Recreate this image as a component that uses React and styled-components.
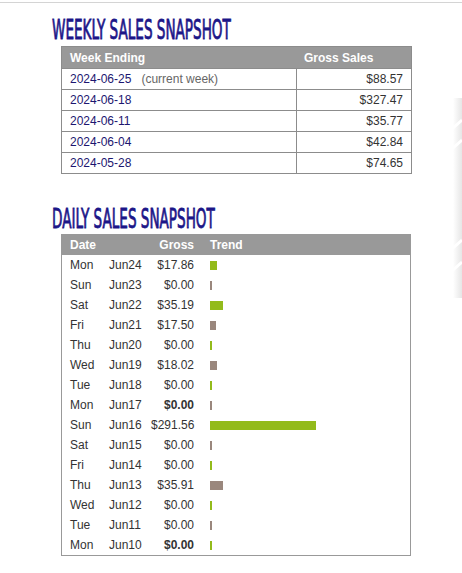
import React from "react";
import styled, { createGlobalStyle } from "styled-components";

const Global = createGlobalStyle`
  body {
    margin: 0;
    background: #fff;
    font-family: "Liberation Sans", Arial, sans-serif;
    font-size: 12px;
    color: #333;
  }
`;

const Page = styled.div`
  position: relative;
  width: 462px;
  height: 573px;
  overflow: hidden;
  border-top: 1px solid #d4d4d4;
  margin-top: 2px;
  box-sizing: border-box;
`;

const Section = styled.section`
  padding-left: 52px;
  padding-top: ${(p) => p.$top}px;
`;

const Heading = styled.h2`
  margin: 0;
  height: 26px;
  font-family: "Liberation Sans Narrow", "DejaVu Sans Condensed", sans-serif;
  font-weight: normal;
  font-size: 26px;
  line-height: 26px;
  color: #1c1688;
  -webkit-text-stroke: 0.8px #1c1688;
  transform: scaleX(0.58);
  transform-origin: left center;
  white-space: nowrap;
`;

const WeekTable = styled.table`
  margin: ${(p) => p.$gap}px 0 0 9px;
  width: 351px;
  border-collapse: collapse;
  border: 1px solid #8c8c8c;

  th {
    background: #999;
    color: #fff;
    font-weight: bold;
    text-align: left;
    height: 21px;
    padding: 0 8px;
    font-size: 12px;
  }

  td {
    border: 1px solid #8c8c8c;
    height: 20px;
    padding: 0 8px;
  }
`;

const DateLink = styled.a`
  color: #1c1670;
  text-decoration: none;
`;

const Note = styled.span`
  color: #666;
  margin-left: 10px;
`;

const Amount = styled.td`
  text-align: right;
  color: #333;
`;

const DayTable = styled.div`
  margin: ${(p) => p.$gap}px 0 0 9px;
  width: 350px;
  border: 1px solid #999;
  box-sizing: border-box;
`;

const DayRow = styled.div`
  display: grid;
  grid-template-columns: 39px 42px 43px 1fr;
  align-items: center;
  height: 20px;
  padding-left: 8px;
  background: ${(p) => (p.$head ? "#999" : "transparent")};
  color: ${(p) => (p.$head ? "#fff" : "#333")};
  font-weight: ${(p) => (p.$head ? "bold" : "normal")};
`;

const Gross = styled.span`
  text-align: right;
  font-weight: ${(p) => (p.$bold ? "bold" : "inherit")};
`;

const TrendCell = styled.span`
  padding-left: 16px;
  display: flex;
  align-items: center;
`;

const Bar = styled.span`
  display: block;
  height: 9px;
  flex: none;
  background: ${(p) => (p.$alt ? "#9a877d" : "#93bb1b")};
`;

const Deco = styled.svg`
  position: absolute;
  right: 0;
  top: 95px;
`;

const weeks = [
  ["2024-06-25", "$88.57", true],
  ["2024-06-18", "$327.47"],
  ["2024-06-11", "$35.77"],
  ["2024-06-04", "$42.84"],
  ["2024-05-28", "$74.65"],
];

const days = [
  ["Mon", "Jun24", 17.86],
  ["Sun", "Jun23", 0],
  ["Sat", "Jun22", 35.19],
  ["Fri", "Jun21", 17.5],
  ["Thu", "Jun20", 0],
  ["Wed", "Jun19", 18.02],
  ["Tue", "Jun18", 0],
  ["Mon", "Jun17", 0, true],
  ["Sun", "Jun16", 291.56],
  ["Sat", "Jun15", 0],
  ["Fri", "Jun14", 0],
  ["Thu", "Jun13", 35.91],
  ["Wed", "Jun12", 0],
  ["Tue", "Jun11", 0],
  ["Mon", "Jun10", 0, true],
];

export default function App() {
  return (
    <Page>
      <Global />
      <Deco width="12" height="200" viewBox="0 0 12 200">
        <defs>
          <linearGradient id="g" x1="0" x2="1">
            <stop offset="0" stopColor="#fff" />
            <stop offset="1" stopColor="#e6e6e6" />
          </linearGradient>
        </defs>
        <path d="M3 0 L12 0 L12 200 L3 200 Z" fill="url(#g)" />
        <path d="M3 30 L12 22 M3 50 L12 42 M3 150 L12 142 M3 172 L12 164" stroke="#fff" strokeWidth="3" />
      </Deco>

      <Section $top={14}>
        <Heading>WEEKLY SALES SNAPSHOT</Heading>
        <WeekTable $gap={3}>
          <thead>
            <tr>
              <th style={{ width: 218 }}>Week Ending</th>
              <th>Gross Sales</th>
            </tr>
          </thead>
          <tbody>
            {weeks.map(([d, amt, cur]) => (
              <tr key={d}>
                <td>
                  <DateLink href="#">{d}</DateLink>
                  {cur && <Note>(current week)</Note>}
                </td>
                <Amount>{amt}</Amount>
              </tr>
            ))}
          </tbody>
        </WeekTable>
      </Section>

      <Section $top={32}>
        <Heading>DAILY SALES SNAPSHOT</Heading>
        <DayTable $gap={2}>
          <DayRow $head>
            <span>Date</span>
            <span />
            <Gross>Gross</Gross>
            <TrendCell>Trend</TrendCell>
          </DayRow>
          {days.map(([dow, date, v, bold], i) => (
            <DayRow key={date}>
              <span>{dow}</span>
              <span>{date}</span>
              <Gross $bold={bold}>${v.toFixed(2)}</Gross>
              <TrendCell>
                <Bar $alt={i % 2 === 1} style={{ width: Math.max(2, Math.round(v * 0.364)) }} />
              </TrendCell>
            </DayRow>
          ))}
        </DayTable>
      </Section>
    </Page>
  );
}
